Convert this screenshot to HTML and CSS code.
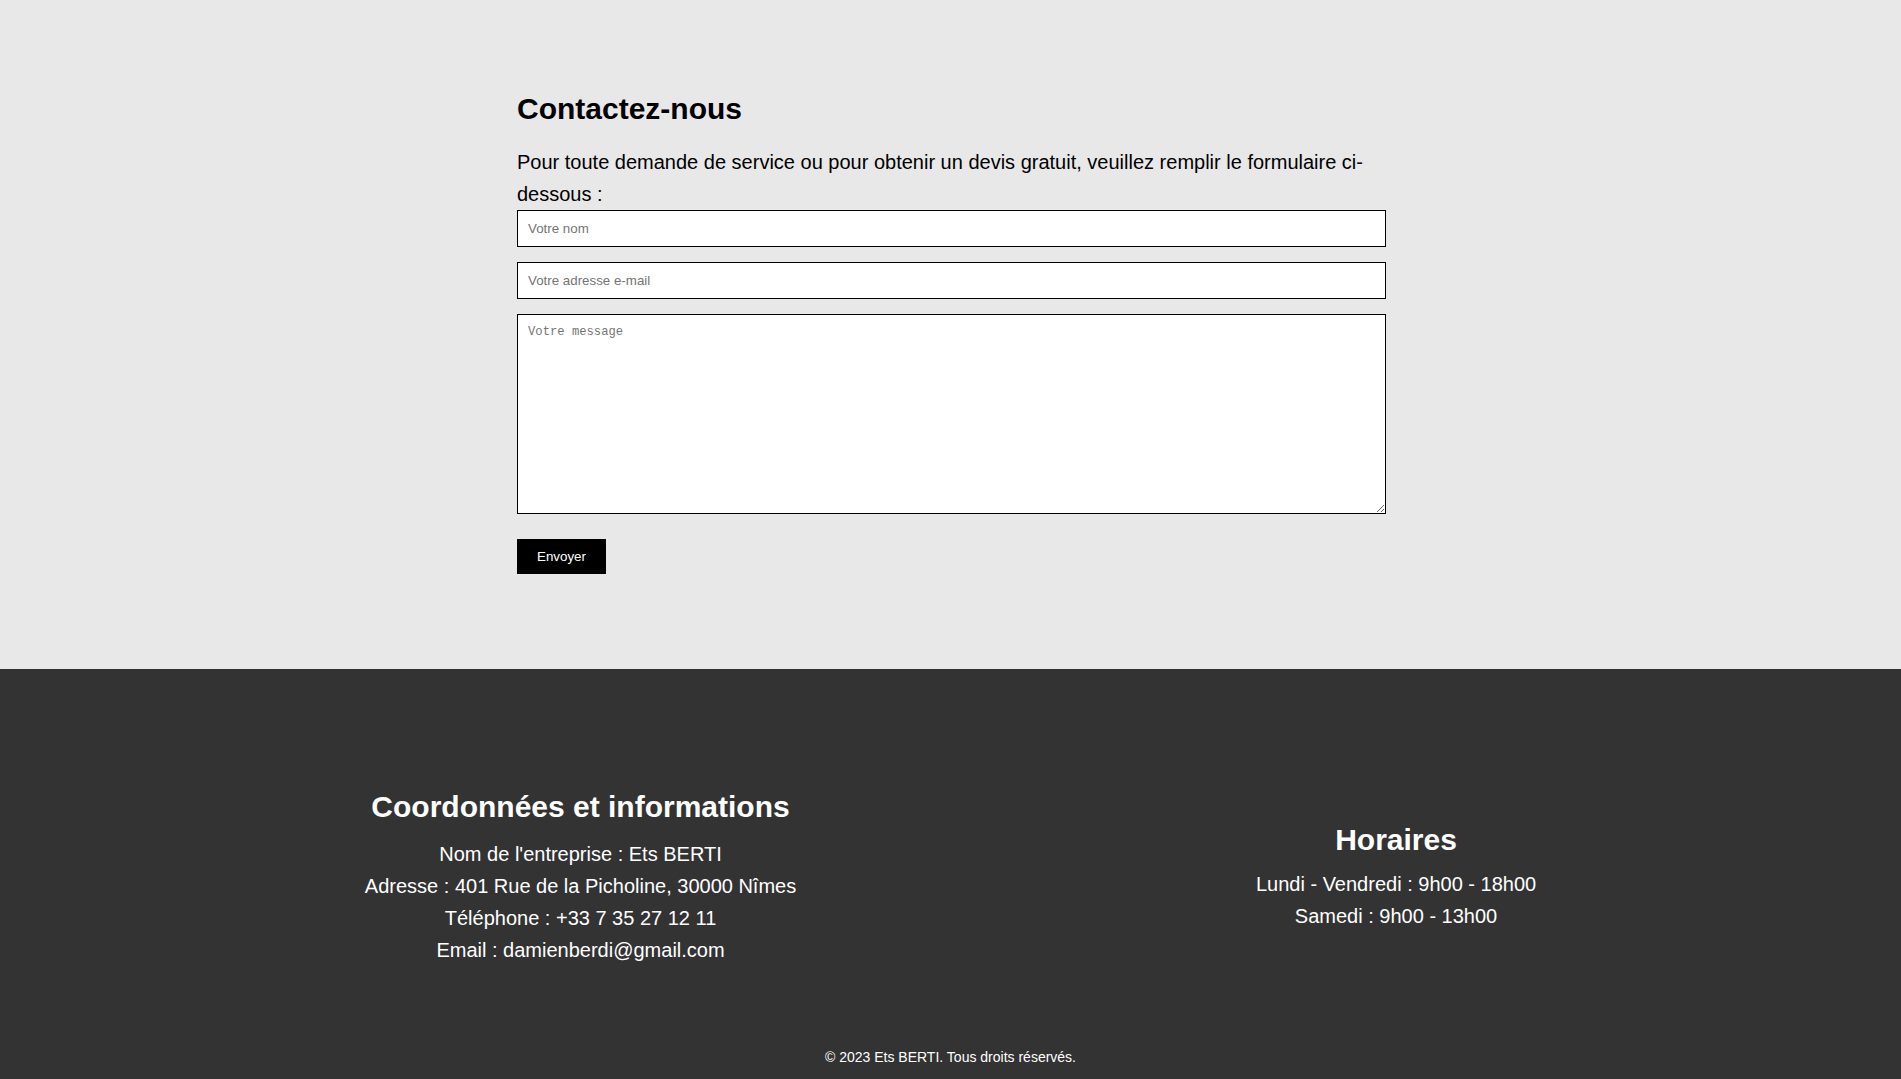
FILE: index.html
```html
<!DOCTYPE html>
<html lang="fr">
<head>
<meta charset="utf-8">
<title>Contactez-nous - Ets BERTI</title>
<link rel="stylesheet" href="styles.css">
</head>
<body>
<main class="contact">
  <div class="contact-inner">
    <h2 class="contact-title">Contactez-nous</h2>
    <p class="contact-intro">Pour toute demande de service ou pour obtenir un devis gratuit, veuillez remplir le formulaire ci-dessous :</p>
    <form class="contact-form">
      <input class="field" type="text" placeholder="Votre nom">
      <input class="field" type="email" placeholder="Votre adresse e-mail">
      <textarea class="field field-message" placeholder="Votre message"></textarea>
      <button class="submit" type="button">Envoyer</button>
    </form>
  </div>
</main>
<footer class="footer">
  <div class="footer-cols">
    <div class="footer-col">
      <h2 class="footer-title">Coordonnées et informations</h2>
      <p class="footer-line">Nom de l'entreprise : Ets BERTI</p>
      <p class="footer-line">Adresse : 401 Rue de la Picholine, 30000 Nîmes</p>
      <p class="footer-line">Téléphone : +33 7 35 27 12 11</p>
      <p class="footer-line">Email : damienberdi@gmail.com</p>
    </div>
    <div class="footer-col footer-col-hours">
      <h2 class="footer-title">Horaires</h2>
      <p class="footer-line">Lundi - Vendredi : 9h00 - 18h00</p>
      <p class="footer-line">Samedi : 9h00 - 13h00</p>
    </div>
  </div>
  <p class="copyright">© 2023 Ets BERTI. Tous droits réservés.</p>
</footer>
</body>
</html>
```
FILE: styles.css
```css
html, body {
  margin: 0;
  padding: 0;
}
body {
  font-family: "Liberation Sans", Arial, sans-serif;
  background: #333333;
}
.contact {
  background: #e8e8e8;
  padding: 92px 0 95px;
}
.contact-inner {
  width: 869px;
  margin: 0 auto;
  padding-left: 2px;
}
.contact-title {
  font-size: 30px;
  font-weight: bold;
  color: #000;
  margin: 0 0 20px;
  line-height: normal;
}
.contact-intro {
  font-size: 20px;
  line-height: 32px;
  color: #000;
  margin: 0;
}
.contact-form {
  display: flex;
  flex-direction: column;
  align-items: flex-start;
}
.field {
  display: block;
  box-sizing: border-box;
  width: 100%;
  padding: 10px;
  border: 1px solid #000;
  border-radius: 0;
  background: #fff;
  font-family: "Liberation Sans", Arial, sans-serif;
  font-size: 13.33px;
  margin: 0 0 15px;
  outline: none;
}
.field-message {
  height: 200px;
  resize: vertical;
  font-family: "Liberation Mono", monospace;
  font-size: 12.2px;
  margin-bottom: 25px;
}
.field::placeholder {
  color: #757575;
}
.submit {
  display: block;
  background: #000;
  color: #fff;
  border: none;
  padding: 10px 20px;
  font-family: "Liberation Sans", Arial, sans-serif;
  font-size: 13.33px;
  line-height: 15px;
  cursor: pointer;
}
.footer {
  background: #333333;
  color: #fff;
  padding: 120px 0 14px;
}
.footer-cols {
  display: flex;
  justify-content: space-around;
  align-items: center;
  padding: 0 135px;
}
.footer-col {
  text-align: center;
}
.footer-title {
  font-size: 30px;
  font-weight: bold;
  margin: 1px 0 14px;
  line-height: normal;
}
.footer-col-hours .footer-title {
  margin: 0 0 11px;
}
.footer-line {
  font-size: 20px;
  line-height: 32px;
  margin: 0;
}
.copyright {
  text-align: center;
  font-size: 14px;
  margin: 83px 0 0;
}
```
